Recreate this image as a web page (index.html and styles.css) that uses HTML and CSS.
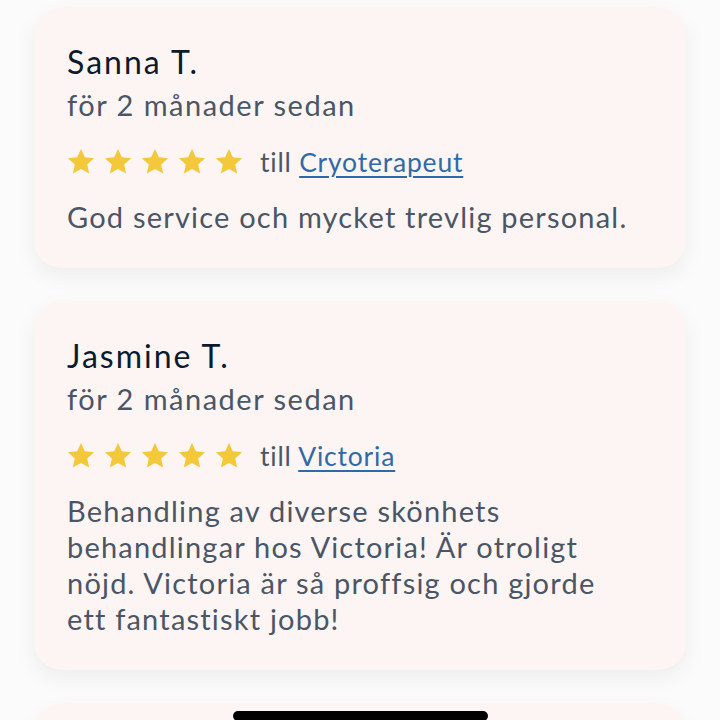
FILE: index.html
```html
<!DOCTYPE html>
<html lang="sv">
<head>
<meta charset="utf-8">
<link rel="stylesheet" href="styles.css">
</head>
<body>
<main class="list">
  <article class="card">
    <h2 class="name">Sanna T.</h2>
    <p class="meta">för 2 månader sedan</p>
    <div class="rating">
      <span class="stars">
        <svg class="star" viewBox="0 0 24 24"><path d="M12 0.8l3.3 7.2 7.9.8-5.9 5.3 1.7 7.8L12 17.9l-7 4 1.7-7.8-5.9-5.3 7.9-.8z"/></svg>
        <svg class="star" viewBox="0 0 24 24"><path d="M12 0.8l3.3 7.2 7.9.8-5.9 5.3 1.7 7.8L12 17.9l-7 4 1.7-7.8-5.9-5.3 7.9-.8z"/></svg>
        <svg class="star" viewBox="0 0 24 24"><path d="M12 0.8l3.3 7.2 7.9.8-5.9 5.3 1.7 7.8L12 17.9l-7 4 1.7-7.8-5.9-5.3 7.9-.8z"/></svg>
        <svg class="star" viewBox="0 0 24 24"><path d="M12 0.8l3.3 7.2 7.9.8-5.9 5.3 1.7 7.8L12 17.9l-7 4 1.7-7.8-5.9-5.3 7.9-.8z"/></svg>
        <svg class="star" viewBox="0 0 24 24"><path d="M12 0.8l3.3 7.2 7.9.8-5.9 5.3 1.7 7.8L12 17.9l-7 4 1.7-7.8-5.9-5.3 7.9-.8z"/></svg>
      </span>
      <span class="to">till <a class="link" href="#">Cryoterapeut</a></span>
    </div>
    <p class="body">God service och mycket trevlig personal.</p>
  </article>
  <article class="card">
    <h2 class="name">Jasmine T.</h2>
    <p class="meta">för 2 månader sedan</p>
    <div class="rating">
      <span class="stars">
        <svg class="star" viewBox="0 0 24 24"><path d="M12 0.8l3.3 7.2 7.9.8-5.9 5.3 1.7 7.8L12 17.9l-7 4 1.7-7.8-5.9-5.3 7.9-.8z"/></svg>
        <svg class="star" viewBox="0 0 24 24"><path d="M12 0.8l3.3 7.2 7.9.8-5.9 5.3 1.7 7.8L12 17.9l-7 4 1.7-7.8-5.9-5.3 7.9-.8z"/></svg>
        <svg class="star" viewBox="0 0 24 24"><path d="M12 0.8l3.3 7.2 7.9.8-5.9 5.3 1.7 7.8L12 17.9l-7 4 1.7-7.8-5.9-5.3 7.9-.8z"/></svg>
        <svg class="star" viewBox="0 0 24 24"><path d="M12 0.8l3.3 7.2 7.9.8-5.9 5.3 1.7 7.8L12 17.9l-7 4 1.7-7.8-5.9-5.3 7.9-.8z"/></svg>
        <svg class="star" viewBox="0 0 24 24"><path d="M12 0.8l3.3 7.2 7.9.8-5.9 5.3 1.7 7.8L12 17.9l-7 4 1.7-7.8-5.9-5.3 7.9-.8z"/></svg>
      </span>
      <span class="to">till <a class="link" href="#">Victoria</a></span>
    </div>
    <p class="body">Behandling av diverse skönhets behandlingar hos Victoria! Är otroligt nöjd. Victoria är så proffsig och gjorde ett fantastiskt jobb!</p>
  </article>
  <article class="card card-peek"></article>
</main>
<div class="home-indicator"></div>
</body>
</html>
```

FILE: styles.css
```css
html, body {
  margin: 0;
  padding: 0;
  background: #fbfbfb;
  height: 720px;
  overflow: hidden;
}
body {
  font-family: "Lato", "Open Sans", sans-serif;
  font-variant-ligatures: none;
  color: #4a5666;
}
.list {
  display: flex;
  flex-direction: column;
  gap: 33px;
  padding: 7px 34px 0;
}
.card {
  background: #fdf5f3;
  border-radius: 28px;
  box-shadow: 0 8px 22px rgba(0, 0, 0, 0.06);
  padding: 37px 33px 33px;
}
.card-peek {
  height: 120px;
  padding: 0;
}
.name {
  margin: 0;
  font-size: 32px;
  line-height: 36px;
  font-weight: 400;
  letter-spacing: 2px;
  color: #0c1a2e;
}
.meta {
  margin: 7px 0 0;
  font-size: 29px;
  line-height: 36px;
  letter-spacing: 1.5px;
  color: #4a5666;
}
.rating {
  margin-top: 21px;
  display: flex;
  align-items: center;
  height: 36px;
  gap: 17px;
}
.stars {
  display: flex;
  gap: 9px;
}
.star {
  width: 28px;
  height: 28px;
  fill: #f4c83b;
}
.to {
  font-size: 26.5px;
  line-height: 36px;
  letter-spacing: 0.8px;
  color: #4a5666;
}
.link {
  color: #2f6aa8;
  text-decoration: underline;
  text-decoration-thickness: 2px;
  text-underline-offset: 4px;
}
.body {
  margin: 19px 0 0;
  max-width: 566px;
  font-size: 29px;
  line-height: 36px;
  letter-spacing: 1.2px;
  color: #4a5666;
}
.home-indicator {
  position: fixed;
  left: 233px;
  top: 711px;
  width: 255px;
  height: 10px;
  border-radius: 5px;
  background: #000;
}
```
